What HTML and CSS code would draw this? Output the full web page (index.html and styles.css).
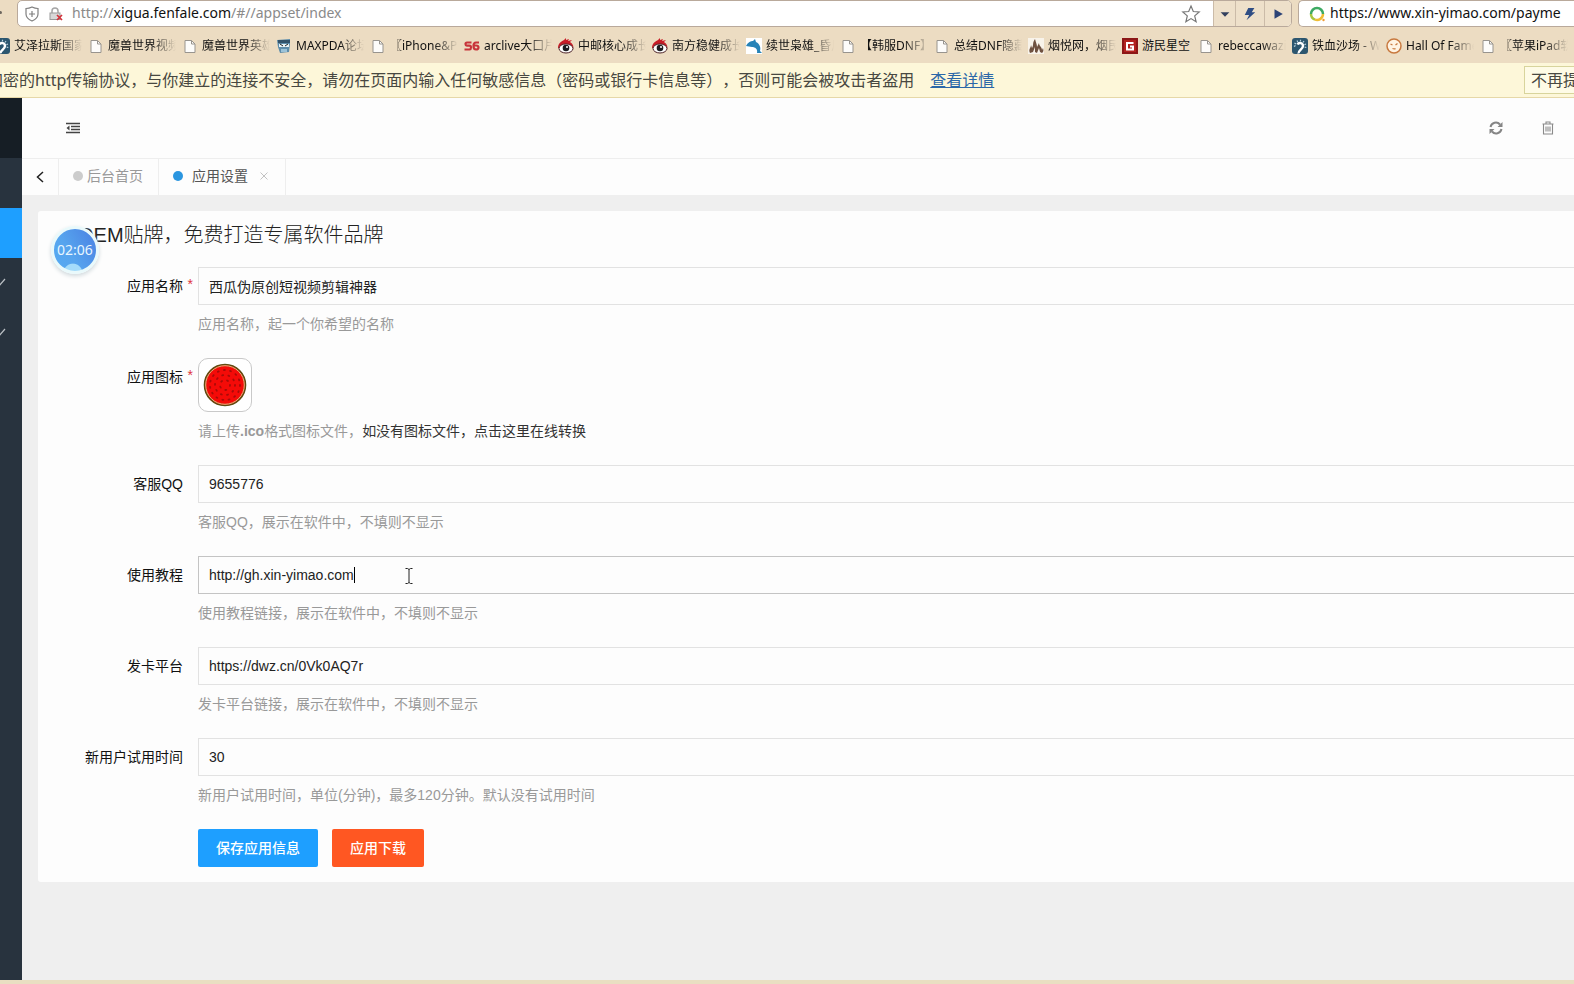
FILE: index.html
```html
<!DOCTYPE html>
<html lang="zh-CN">
<head>
<meta charset="utf-8">
<title>应用设置</title>
<link rel="stylesheet" href="styles.css">
</head>
<body>
<svg class="defs" aria-hidden="true">
  <symbol id="page" viewBox="0 0 16 16"><path d="M3 2.500h6.500l3.500 3.500v8.500H3z" fill="#fdfcfa" stroke="#98948e"/><path d="M9.500 2.500V6H13" fill="none" stroke="#98948e"/></symbol>
  <symbol id="fern" viewBox="0 0 16 16"><rect width="16" height="16" rx="3" fill="#2c566f"/><path d="M6.500 15.500c-.5-3 4.500-4 4.500-7.500 0-3-4-4-5.500-1.500" fill="none" stroke="#fff" stroke-width="2.400"/><path d="M2 8.500l1.500-1M2.500 5l1.600 1M5 2.500l.8 1.700M8.500 1.800v1.800M12 3l-1 1.500M14 6l-1.600.7M14.300 9.500l-1.600-.3" stroke="#b9d3e0" stroke-width="1.200"/></symbol>
  <symbol id="weibo" viewBox="0 0 16 16"><path d="M0 10C0 5 4 3 6 2l2-2v2l3-1-1 2 4-1-2 2c3 2 4 4 3 7z" fill="#c71c27"/><ellipse cx="8" cy="10.500" rx="7" ry="4.500" fill="#fff" stroke="#4b2226"/><circle cx="8" cy="10" r="3.300" fill="#1c1c20"/><circle cx="9" cy="9" r="1" fill="#fff"/></symbol>
</svg>

<header class="browser">
  <div class="address-row">
    <span class="nav-dot"></span>
    <div class="address-box">
      <svg class="ico-shield" viewBox="0 0 14 16"><path d="M7 1c2 1 4 1.500 6 1.500V8c0 3-2.500 5.500-6 7C3.500 13.500 1 11 1 8V2.500C3 2.500 5 2 7 1z" fill="none" stroke="#7f7f7f" stroke-width="1.200"/><path d="M7 5v6M4 8h6" stroke="#7f7f7f" stroke-width="1.200"/></svg>
      <svg class="ico-lock" viewBox="0 0 14 14"><path d="M3 6V4a3 3 0 0 1 6 0v2" fill="none" stroke="#a5a5a5" stroke-width="1.500"/><rect x="1" y="6" width="10" height="6.500" fill="#d8d8d8" stroke="#999"/><path d="M8 8l5 5M13 8l-5 5" stroke="#d2313a" stroke-width="1.700"/></svg>
      <div class="url">http://<b>xigua.fenfale.com</b>/#//appset/index</div>
      <button class="star" aria-label="收藏"><svg viewBox="0 0 20 20"><path d="M10 2l2.300 5.500 5.900.5-4.500 3.900 1.400 5.800L10 14.600l-5.100 3.100 1.400-5.800L1.800 8l5.900-.5z" fill="#fff" stroke="#777" stroke-width="1.200"/></svg></button>
      <button class="tool" aria-label="下拉"><svg viewBox="0 0 16 16"><path d="M3 6h10l-5 5z" fill="#33405e"/></svg></button>
      <button class="tool wide" aria-label="极速模式"><svg viewBox="0 0 16 16"><path d="M6 1h7l-3 5h4L4 15l3-6H2z" fill="#2f4d84"/></svg></button>
      <button class="tool last" aria-label="转到"><svg viewBox="0 0 16 16"><path d="M4 2.500l9.500 5.500L4 13.500z" fill="#2c4377"/></svg></button>
    </div>
    <div class="search-box">
      <svg viewBox="0 0 16 16"><path d="M2 8a6 6 0 0 1 12 0" fill="none" stroke="#3daa62" stroke-width="2.500"/><path d="M2 8a6 6 0 0 0 4 5.600" fill="none" stroke="#a7c63f" stroke-width="2.500"/><path d="M14 8a6 6 0 0 1-8 5.600" fill="none" stroke="#f0bd35" stroke-width="2.500"/><circle cx="14.500" cy="14" r="1.200" fill="#f09a35"/></svg>
      <input type="text" aria-label="搜索" value="https://www.xin-yimao.com/payme">
    </div>
  </div>

  <nav class="bookmarks">
    <a href="#"><svg><use href="#fern"/></svg><span>艾泽拉斯国家</span></a>
    <a href="#"><svg><use href="#page"/></svg><span>魔兽世界视频</span></a>
    <a href="#"><svg><use href="#page"/></svg><span>魔兽世界英雄</span></a>
    <a href="#"><svg viewBox="0 0 16 16"><path d="M1 2l13-1v5l-1 8-9 1-2-6z" fill="#5e8dab"/><path d="M2 2h12v3H2z" fill="#33536b"/><path d="M3 6h10v3H3z" fill="#e8f2f6"/><path d="M4 6l3 2M12 6L9 8" stroke="#222"/><path d="M5 11h6v3H5z" fill="#9cc3d8"/></svg><span>MAXPDA论坛</span></a>
    <a href="#"><svg><use href="#page"/></svg><span>〖iPhone&amp;P</span></a>
    <a href="#"><svg viewBox="0 0 16 16"><path d="M7.500 4.500H3Q1.500 4.500 1.500 6T3 7.700h2.500Q7 7.700 7 9.500T5.500 11.500H.5M15 4.500h-3Q9.500 4.500 9.500 8t2.500 3.500 2.500-2-2.500-2H10" fill="none" stroke="#c8343b" stroke-width="2.200"/></svg><span>arclive大口片</span></a>
    <a href="#"><svg><use href="#weibo"/></svg><span>中邮核心成长</span></a>
    <a href="#"><svg><use href="#weibo"/></svg><span>南方稳健成长</span></a>
    <a href="#"><svg viewBox="0 0 16 16"><rect width="16" height="16" fill="#fff"/><path d="M0 8c2-4 5-5 7-5l2-2 1 3c4 2 5 6 4 9l2 2h-5c1-4-2-6-5-6z" fill="#2683b7"/></svg><span>续世枭雄_昏风</span></a>
    <a href="#"><svg><use href="#page"/></svg><span>【韩服DNF】</span></a>
    <a href="#"><svg><use href="#page"/></svg><span>总结DNF隐藏</span></a>
    <a href="#"><svg viewBox="0 0 16 16"><rect width="16" height="16" fill="#f8f3ea"/><path d="M2 15c-2-4 1-5 1-8l1 3c2-3 0-5 3-9 1 4 2 5 2 8l2-4c0 3 3 4 3 7l1-2c1 3 0 4-1 5l-2-1-1-4-2 5-2-1V9l-2 5z" fill="#6f5140"/></svg><span>烟悦网，烟民</span></a>
    <a href="#" class="short"><svg viewBox="0 0 16 16"><rect width="16" height="16" fill="#8c1717"/><rect x="2" y="2" width="12" height="12" fill="#b3221f"/><path d="M11.500 5H5v6.500h6V8.500H8" fill="none" stroke="#fff" stroke-width="2"/></svg><span>游民星空</span></a>
    <a href="#"><svg><use href="#page"/></svg><span>rebeccawazi</span></a>
    <a href="#"><svg><use href="#fern"/></svg><span>铁血沙场 - Wo</span></a>
    <a href="#"><svg viewBox="0 0 16 16"><circle cx="8" cy="8" r="7" fill="#fff3e2" stroke="#c8793f" stroke-width="1.500"/><path d="M4.500 6l2 1M11.500 5.500l-2 1.500M6.500 10.500q2 .8 3 0" fill="none" stroke="#c8793f" stroke-width="1.300"/></svg><span>Hall Of Fame</span></a>
    <a href="#"><svg><use href="#page"/></svg><span>〖苹果iPad软</span></a>
  </nav>

  <div class="warning">
    <p>加密的http传输协议，与你建立的连接不安全，请勿在页面内输入任何敏感信息（密码或银行卡信息等），否则可能会被攻击者盗用</p>
    <a href="#">查看详情</a>
    <button>不再提示</button>
  </div>
</header>

<div class="app">
  <aside class="sidebar">
    <div class="logo"></div>
    <div class="item"></div>
    <div class="item active"></div>
    <div class="item"><svg viewBox="0 0 10 10"><path d="M0 8l1 1 7-8" fill="none" stroke="#b9bec3" stroke-width="1.200"/></svg></div>
    <div class="item"><svg viewBox="0 0 10 10"><path d="M0 8l1 1 7-8" fill="none" stroke="#b9bec3" stroke-width="1.200"/></svg></div>
  </aside>

  <main class="main">
    <div class="toolbar">
      <button aria-label="收起菜单"><svg viewBox="0 0 14 14"><path d="M0 2.500h14M5 5.500h9M5 8.500h9M0 11.500h14" stroke="#444" stroke-width="1.700"/><path d="M3.500 4.500v5L.5 7z" fill="#444"/></svg></button>
      <span class="space"></span>
      <button class="refresh" aria-label="刷新"><svg viewBox="0 0 14 14"><path d="M1.500 6A5.500 5.500 0 0 1 11 3.500M12.500 8A5.500 5.500 0 0 1 3 10.500" fill="none" stroke="#858585" stroke-width="2"/><path d="M13.500 1v5h-5zM.5 13V8h5z" fill="#858585"/></svg></button>
      <button aria-label="清除缓存"><svg viewBox="0 0 14 14"><path d="M1.500 3h11M5 3V1h4v2M2.500 3v10h9V3M5 5.500v5M7 5.500v5M9 5.500v5" fill="none" stroke="#8a8a8a" stroke-width="1.100"/></svg></button>
    </div>

    <nav class="tabs">
      <button class="prev" aria-label="向左"><svg viewBox="0 0 8 12"><path d="M7 1L1.500 6 7 11" fill="none" stroke="#222" stroke-width="1.500"/></svg></button>
      <a href="#" class="tab home"><i></i>后台首页</a>
      <a href="#" class="tab current"><i></i>应用设置<svg viewBox="0 0 8 8"><path d="M.5.5l7 7M7.500.5l-7 7" stroke="#c2c2c2"/></svg></a>
    </nav>

    <section class="card">
      <div class="timer">02:06</div>
      <h1>OEM贴牌，免费打造专属软件品牌</h1>
      <form>
        <div class="row">
          <label for="name" class="required">应用名称</label>
          <div class="field"><input id="name" type="text" value="西瓜伪原创短视频剪辑神器"><p>应用名称，起一个你希望的名称</p></div>
        </div>
        <div class="row">
          <label for="icon" class="required">应用图标</label>
          <div class="field">
            <button type="button" id="icon" class="upload">
              <svg viewBox="0 0 44 44"><circle cx="22" cy="22" r="20.500" fill="#f40b08" stroke="#5e4a10" stroke-width="1.600"/><circle cx="22" cy="22" r="19.300" fill="none" stroke="#dcb87c" stroke-width="1"/><g fill="none" stroke="#a80b08" stroke-width="1.800" stroke-linecap="round"><circle cx="22" cy="22" r="15" stroke-dasharray="1 5.280"/><circle cx="22" cy="22" r="10" stroke-dasharray="1 5.280"/><circle cx="22" cy="22" r="5" stroke-dasharray="1 5.280"/></g></svg>
            </button>
            <p>请上传<b>.ico</b>格式图标文件，<a href="#">如没有图标文件，点击这里在线转换</a></p>
          </div>
        </div>
        <div class="row">
          <label for="qq">客服QQ</label>
          <div class="field"><input id="qq" type="text" value="9655776"><p>客服QQ，展示在软件中，不填则不显示</p></div>
        </div>
        <div class="row">
          <label for="guide">使用教程</label>
          <div class="field">
            <input id="guide" class="editing" type="text" value="http://gh.xin-yimao.com">
            <span class="caret"></span>
            <svg class="ibeam" viewBox="0 0 8 16"><path d="M.5.5h2L4 1.500 5.500.5h2M4 1.500v13M.5 15.500h2L4 14.500l1.500 1h2" fill="none" stroke="#222"/></svg>
            <p>使用教程链接，展示在软件中，不填则不显示</p>
          </div>
        </div>
        <div class="row">
          <label for="card">发卡平台</label>
          <div class="field"><input id="card" type="text" value="https://dwz.cn/0Vk0AQ7r"><p>发卡平台链接，展示在软件中，不填则不显示</p></div>
        </div>
        <div class="row">
          <label for="trial">新用户试用时间</label>
          <div class="field"><input id="trial" type="text" value="30"><p>新用户试用时间，单位(分钟)，最多120分钟。默认没有试用时间</p></div>
        </div>
        <div class="actions">
          <button type="button" class="btn">保存应用信息</button>
          <button type="button" class="btn orange">应用下载</button>
        </div>
      </form>
    </section>
  </main>
</div>
</body>
</html>
```
FILE: styles.css
```css
* { box-sizing: border-box; }
body {
  margin: 0;
  min-height: 100vh;
  display: flex;
  flex-direction: column;
  overflow: hidden;
  border-bottom: 4px solid #e9dfc2;
  font: 14px/20px "Liberation Sans", "Noto Sans CJK SC", sans-serif;
  text-spacing-trim: space-all;
  color: #111;
}
a { color: inherit; text-decoration: none; }
p, h1 { margin: 0; }
button { padding: 0; border: 0; background: none; font: inherit; color: inherit; }
svg { display: block; flex: none; width: 16px; height: 16px; }
.defs { position: absolute; width: 0; height: 0; }

.browser {
  font-family: "Noto Sans", "Noto Sans CJK SC", sans-serif;
  background: #ecdcc2;
}
.address-row { display: flex; height: 28px; padding-bottom: 1px; }
.nav-dot { flex: none; width: 3px; height: 3px; margin: 11px 15px 0 -1px; border-radius: 2px; background: #6d675e; }
.address-box {
  flex: 1;
  display: flex;
  align-items: center;
  padding-left: 7px;
  border: 1px solid #b9a99b;
  border-radius: 5px;
  background: #fff;
  overflow: hidden;
}
.ico-shield { width: 14px; }
.ico-lock { width: 14px; height: 14px; margin-left: 10px; }
.url { flex: 1; margin-left: 9px; padding-bottom: 2px; font-size: 14px; color: #8a8a8a; white-space: nowrap; }
.url b { font-weight: 400; color: #111; }
.star { margin-right: 12px; }
.star svg { width: 20px; height: 20px; }
.tool {
  align-self: stretch;
  display: grid;
  place-items: center;
  width: 22px;
  border-left: 1px solid #cbbba8;
  background: #eee0ca;
}
.tool svg { width: 14px; height: 14px; }
.wide { width: 29px; }
.last { width: 27px; }
.search-box {
  flex: none;
  display: flex;
  align-items: center;
  width: 276px;
  margin-left: 6px;
  padding-left: 10px;
  border: 1px solid #b9a99b;
  border-right: 0;
  border-radius: 5px 0 0 5px;
  background: #fff;
}
.search-box input {
  flex: 1;
  min-width: 0;
  margin-left: 5px;
  padding: 0 0 2px;
  border: 0;
  font: inherit;
  color: #111;
}

.bookmarks { display: flex; gap: 4px; height: 35px; margin-left: -6px; align-items: center; font-size: 12px; }
.bookmarks a { flex: none; display: flex; align-items: center; gap: 4px; width: 90px; }
.bookmarks .short { width: 72px; }
.bookmarks span {
  flex: 1;
  overflow: hidden;
  white-space: nowrap;
  -webkit-mask-image: linear-gradient(90deg, #000 44px, transparent 68px);
  mask-image: linear-gradient(90deg, #000 44px, transparent 68px);
}
.bookmarks .short span { -webkit-mask-image: none; mask-image: none; }

.warning {
  display: flex;
  align-items: center;
  height: 35px;
  border-bottom: 1px solid #e6d8a8;
  background: #fdf7d9;
  font-size: 16px;
  line-height: 24px;
  color: #484841;
  white-space: nowrap;
}
.warning p { margin-left: -13px; }
.warning a { margin-left: 16px; color: #2b67a8; text-decoration: underline; }
.warning button {
  flex: none;
  width: 50px;
  height: 28px;
  margin-left: auto;
  padding-left: 6px;
  border: 1px solid #d8d49c;
  border-right: 0;
  background: #fefbe6;
  text-align: left;
  overflow: hidden;
}

.app { flex: 1; display: flex; }
.sidebar { flex: none; width: 22px; background: #28333e; }
.logo { height: 60px; background: #161e25; }
.item { display: flex; align-items: center; height: 50px; }
.item svg { width: 10px; height: 10px; margin-left: -3px; }
.active { background: #1e9fff; }

.main { flex: 1; min-width: 0; background: #efefef; }
.toolbar {
  display: flex;
  align-items: center;
  height: 61px;
  padding: 0 19px 0 44px;
  border-bottom: 1px solid #eee;
  background: #fdfdfd;
}
.toolbar svg { width: 14px; height: 14px; }
.space { flex: 1; }
.refresh { margin-right: 38px; }
.tabs { display: flex; height: 36px; background: #fdfdfd; }
.prev { display: grid; place-items: center; width: 37px; border-right: 1px solid #eee; }
.prev svg { width: 8px; height: 12px; }
.tab { display: flex; align-items: center; padding: 0 15px 2px 14px; border-right: 1px solid #eee; color: #999; }
.tab i { width: 10px; height: 10px; margin-right: 4px; border-radius: 5px; background: #ccc; }
.current { padding-right: 17px; color: #555; }
.current i { margin-right: 9px; background: #2b96e0; }
.current svg { width: 8px; height: 8px; margin-left: 12px; }

.card {
  position: relative;
  margin: 16px 0 0 16px;
  padding: 9px 0 15px;
  border-radius: 3px 0 0 3px;
  background: #fdfdfd;
}
.card h1 { margin: 0 0 17px 40px; font-size: 20px; line-height: 30px; font-weight: 300; color: #222; }
.timer {
  position: absolute;
  left: 13px;
  top: 15px;
  width: 48px;
  height: 48px;
  border: 3px solid #e9f9fb;
  border-radius: 24px;
  background: radial-gradient(circle at 45% 105%, #a4dcfb 18%, transparent 20%), linear-gradient(240deg, #4c86e4 10%, #56a4ee 60%, #55aaf2);
  box-shadow: 0 2px 4px #cfd8dc;
  font: 14px/42px "Noto Sans", sans-serif;
  color: #e8f6ff;
  text-align: center;
}
.row { display: flex; margin-bottom: 15px; }
.row label { position: relative; flex: none; width: 160px; padding: 9px 15px 9px 0; text-align: right; }
.required::after { content: "*"; position: absolute; right: 5px; top: 7px; color: #e0323c; }
.field { position: relative; flex: 1; min-width: 0; }
.field input {
  display: block;
  width: 100%;
  height: 38px;
  padding: 0 10px;
  border: 1px solid #e2e2e2;
  border-right: 0;
  background: #fdfdfd;
  font: inherit;
  color: #222;
}
.field .editing { border-color: #c4c4c4; }
.field p { color: #999; line-height: 38px; }
.field p a { color: #333; }
.caret { position: absolute; left: 156px; top: 11px; width: 1px; height: 16px; background: #000; }
.ibeam { position: absolute; left: 207px; top: 12px; width: 8px; height: 16px; }
.upload {
  display: grid;
  place-items: center;
  width: 54px;
  height: 54px;
  border: 1px solid #c9c9c9;
  border-radius: 10px;
  background: #fff;
}
.upload svg { width: 44px; height: 44px; }
.actions { display: flex; gap: 14px; padding-left: 160px; }
.btn { height: 38px; padding: 0 18px; border-radius: 2px; background: #1e9fff; color: #fff; font-weight: 500; }
.orange { background: #ff5722; }
```
